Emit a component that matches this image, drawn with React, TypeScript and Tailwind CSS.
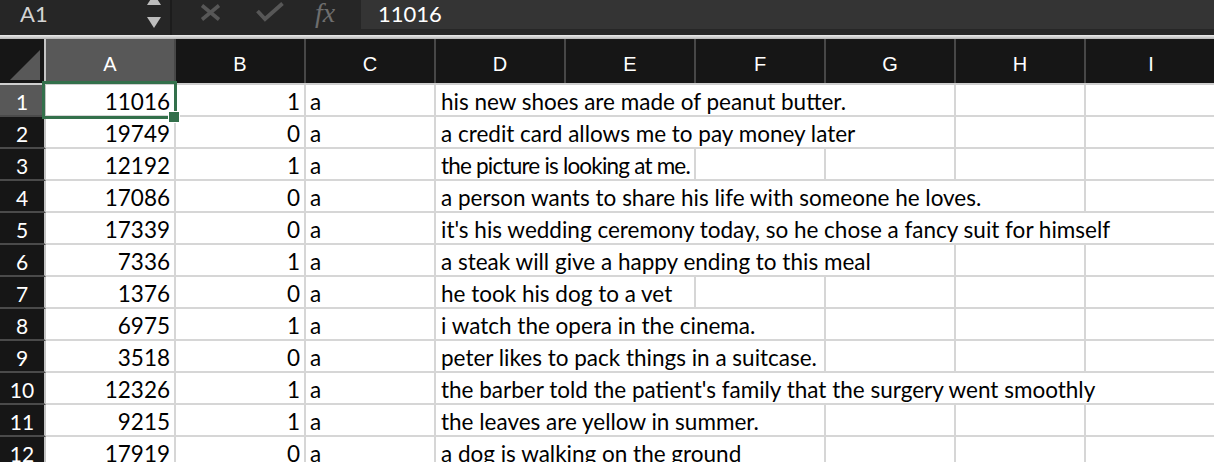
import React from 'react';

type Row = [number, number, string, string, number, string];

const rows: Row[] = [
  [11016, 1, 'a', 'his new shoes are made of peanut butter.', 4, ''],
  [19749, 0, 'a', 'a credit card allows me to pay money later', 4, ''],
  [12192, 1, 'a', 'the picture is looking at me.', 2, 'tracking-[-0.8px]'],
  [17086, 0, 'a', 'a person wants to share his life with someone he loves.', 5, ''],
  [17339, 0, 'a', "it's his wedding ceremony today, so he chose a fancy suit for himself", 6, ''],
  [7336, 1, 'a', 'a steak will give a happy ending to this meal', 4, ''],
  [1376, 0, 'a', 'he took his dog to a vet', 2, ''],
  [6975, 1, 'a', 'i watch the opera in the cinema.', 3, ''],
  [3518, 0, 'a', 'peter likes to pack things in a suitcase.', 3, ''],
  [12326, 1, 'a', "the barber told the patient's family that the surgery went smoothly", 6, ''],
  [9215, 1, 'a', 'the leaves are yellow in summer.', 3, ''],
  [17919, 0, 'a', 'a dog is walking on the ground', 3, ''],
];

const cols = ['A', 'B', 'C', 'D', 'E', 'F', 'G', 'H', 'I'];

const cell =
  "h-[32px] shrink-0 border-r-2 border-b-2 border-[#d6d6d6] whitespace-nowrap text-[22.5px] leading-[34px] text-black";

export default function App() {
  return (
    <div className="relative w-[1214px] h-[462px] overflow-hidden bg-white font-['Lato',sans-serif]">
      {/* toolbar */}
      <div className="flex h-[35px] bg-[#262626]">
        <div className="flex w-[172px] shrink-0 items-start justify-between border-r-2 border-[#1c1c1c] pl-[20px] pr-[9px]">
          <span className="text-[22px] leading-[28px] text-[#d4d4d4]">A1</span>
          <svg width="14" height="35" viewBox="0 0 14 35">
            <polygon points="0,5 14,5 7,-6" fill="#bdbdbd" />
            <polygon points="0,17 14,17 7,28" fill="#bdbdbd" />
          </svg>
        </div>
        <div className="flex w-[189px] shrink-0 items-start">
          <svg width="21" height="17" viewBox="0 0 21 17" className="ml-[28px] mt-[4px]">
            <line x1="2" y1="1.5" x2="19" y2="15.5" stroke="#575757" strokeWidth="3.6" />
            <line x1="19" y1="1.5" x2="2" y2="15.5" stroke="#575757" strokeWidth="3.6" />
          </svg>
          <svg width="28" height="20" viewBox="0 0 28 20" className="ml-[35px] mt-[2px]">
            <polyline points="1.5,9 9,17 26.5,1.5" fill="none" stroke="#575757" strokeWidth="3.8" />
          </svg>
          <span className="ml-[31px] mt-[-3px] font-['Liberation_Serif',serif] text-[28px] italic leading-[32px] text-[#6e6e6e]">
            fx
          </span>
        </div>
        <div className="h-[29px] flex-1 bg-[#343434] pl-[17px] text-[22px] leading-[27px] text-white">
          11016
        </div>
      </div>

      {/* separator band */}
      <div className="h-[4px] bg-linear-to-b from-[#ececec] to-[#b4b4b4]" />

      {/* column headers */}
      <div className="flex h-[46px] border-b-2 border-[#cfcfcf] bg-[#161616]">
        <div className="relative w-[46px] shrink-0 border-r-2 border-[#c4c4c4]">
          <svg width="44" height="44" viewBox="0 0 44 44" className="absolute left-0 top-0">
            <polygon points="10,41 40,41 40,11" fill="#585858" />
          </svg>
        </div>
        {cols.map((c, i) => (
          <div
            key={c}
            className={
              'flex w-[130px] shrink-0 items-center justify-center pt-[5px] font-["Liberation_Sans",sans-serif] text-[20px] text-white ' +
              (i === 0 ? 'bg-[#585858] ' : '') +
              (i < cols.length - 1 ? 'border-r-2 border-[#474747]' : '')
            }
          >
            {c}
          </div>
        ))}
      </div>

      {/* rows */}
      {rows.map(([a, b, c, d, span, extra], idx) => (
        <div key={idx} className="flex h-[32px]">
          <div
            className={
              'h-[32px] w-[46px] shrink-0 border-r-2 border-b-2 border-r-[#c4c4c4] border-b-[#4a4a4a] text-center text-[21px] leading-[34px] text-white ' +
              (idx === 0 ? 'bg-[#585858]' : 'bg-[#161616]')
            }
          >
            {idx + 1}
          </div>
          <div className={cell + ' w-[130px] pr-[4px] text-right'}>{a}</div>
          <div className={cell + ' w-[130px] pr-[4px] text-right'}>{b}</div>
          <div className={cell + ' w-[130px] pl-[4px]'}>{c}</div>
          <div className={cell + ' pl-[5px] ' + extra} style={{ width: 130 * span }}>
            {d}
          </div>
          {Array.from({ length: 6 - span }).map((_, k) => (
            <div key={k} className={cell + ' w-[130px]'} />
          ))}
        </div>
      ))}

      {/* selection */}
      <div className="pointer-events-none absolute left-[42px] top-[81px] h-[38px] w-[135px] border-[3px] border-[#33704b]" />
      <div className="pointer-events-none absolute left-[168px] top-[111px] h-[12px] w-[12px] border border-white bg-[#33704b]" />
    </div>
  );
}
